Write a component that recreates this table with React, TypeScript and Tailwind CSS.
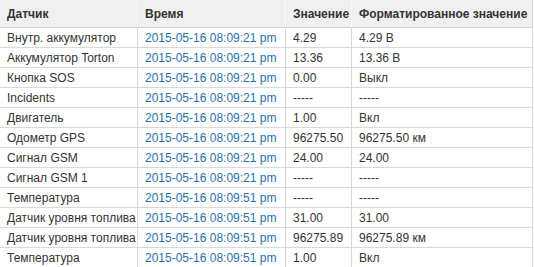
const rows = [
  { name: 'Внутр. аккумулятор', time: '2015-05-16 08:09:21 pm', value: '4.29', formatted: '4.29 В' },
  { name: 'Аккумулятор Torton', time: '2015-05-16 08:09:21 pm', value: '13.36', formatted: '13.36 В' },
  { name: 'Кнопка SOS', time: '2015-05-16 08:09:21 pm', value: '0.00', formatted: 'Выкл' },
  { name: 'Incidents', time: '2015-05-16 08:09:21 pm', value: '-----', formatted: '-----' },
  { name: 'Двигатель', time: '2015-05-16 08:09:21 pm', value: '1.00', formatted: 'Вкл' },
  { name: 'Одометр GPS', time: '2015-05-16 08:09:21 pm', value: '96275.50', formatted: '96275.50 км' },
  { name: 'Сигнал GSM', time: '2015-05-16 08:09:21 pm', value: '24.00', formatted: '24.00' },
  { name: 'Сигнал GSM 1', time: '2015-05-16 08:09:21 pm', value: '-----', formatted: '-----' },
  { name: 'Температура', time: '2015-05-16 08:09:51 pm', value: '-----', formatted: '-----' },
  { name: 'Датчик уровня топлива', time: '2015-05-16 08:09:51 pm', value: '31.00', formatted: '31.00' },
  { name: 'Датчик уровня топлива', time: '2015-05-16 08:09:51 pm', value: '96275.89', formatted: '96275.89 км' },
  { name: 'Температура', time: '2015-05-16 08:09:51 pm', value: '1.00', formatted: 'Вкл' },
];

const headers = ['Датчик', 'Время', 'Значение', 'Форматированное значение'];

const App = () => {
  return (
    <div className="w-[534px] h-[267px] overflow-hidden bg-white text-[12px] text-[#333] font-['Liberation_Sans',Arial,sans-serif]">
      <div className="grid grid-cols-[138px_148px_66px_181px]">
        {headers.map((h, i) => (
          <div
            key={h}
            className={`h-[28px] flex items-center pl-[7px] bg-[#f0f0f0] border-b border-[#d4d4d4] font-bold whitespace-nowrap ${
              i < 3 ? 'border-r border-r-[#fafafa]' : 'border-r border-r-[#d4d4d4]'
            }`}
          >
            {h}
          </div>
        ))}
        {rows.map((row, index) => (
          <div key={index} className="contents">
            <div className="h-[20px] flex items-center pl-[7px] border-b border-r border-[#d9d9d9] whitespace-nowrap overflow-hidden">
              {row.name}
            </div>
            <div className="h-[20px] flex items-center pl-[7px] border-b border-r border-[#d9d9d9] whitespace-nowrap overflow-hidden text-[#1f72ab]">
              {row.time}
            </div>
            <div className="h-[20px] flex items-center pl-[7px] border-b border-r border-[#d9d9d9] whitespace-nowrap overflow-hidden">
              {row.value}
            </div>
            <div className="h-[20px] flex items-center pl-[7px] border-b border-r border-[#d9d9d9] whitespace-nowrap overflow-hidden">
              {row.formatted}
            </div>
          </div>
        ))}
      </div>
    </div>
  );
};

export default App;
